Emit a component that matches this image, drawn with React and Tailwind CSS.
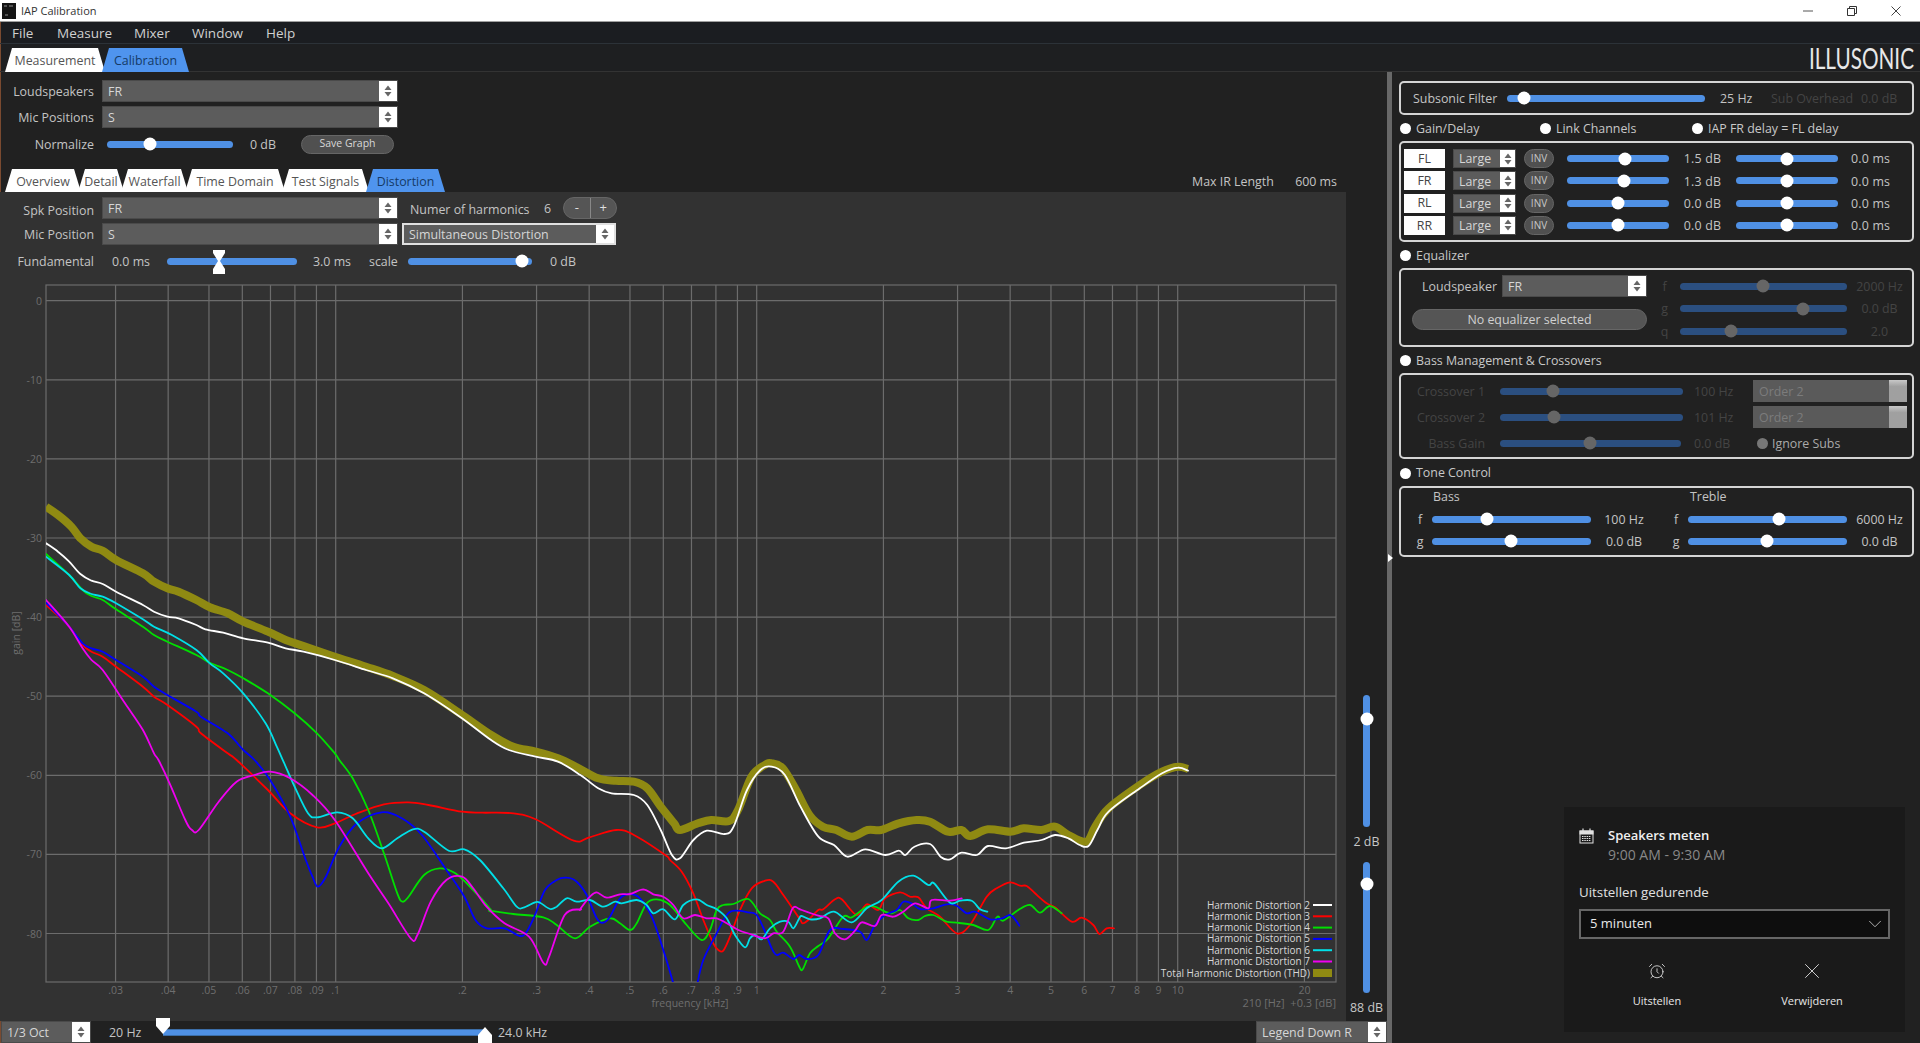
import React from "react";
import { AlarmClock, ChevronDown, X } from "lucide-react";

const FONT = "[font-family:'Open_Sans',sans-serif]";

// curve data was read off the plot, each run is [originX, originY, scaleX, points...]
const z5 = (...p) => [0, 280, 2.24, p];
const z6 = (...p) => [0, 760, 2.24, p];
const z7 = (...p) => [680, 720, 2.24, p];
const za = (...p) => [440, 860, 3, p];
const zb = (...p) => [760, 860, 3, p];

const toPoints = (runs) =>
  runs.flatMap(([ox, oy, sx, p]) => {
    const out = [];
    for (let i = 0; i < p.length; i += 2) out.push([ox + p[i] / sx, oy + p[i + 1] / 3]);
    return out;
  });

const smooth = (pts) => {
  let d = `M${pts[0][0].toFixed(1)} ${pts[0][1].toFixed(1)}`;
  for (let i = 0; i < pts.length - 1; i++) {
    const a = pts[i - 1] || pts[i];
    const b = pts[i];
    const c = pts[i + 1];
    const e = pts[i + 2] || c;
    const c1 = [b[0] + (c[0] - a[0]) / 6, b[1] + (c[1] - a[1]) / 6];
    const c2 = [c[0] - (e[0] - b[0]) / 6, c[1] - (e[1] - b[1]) / 6];
    d += `C${c1[0].toFixed(1)} ${c1[1].toFixed(1)} ${c2[0].toFixed(1)} ${c2[1].toFixed(1)} ${c[0].toFixed(1)} ${c[1].toFixed(1)}`;
  }
  return d;
};

const thd = [
  z5(103,680,130,705,160,740,180,775,205,800,230,812,260,840,320,880,345,905,375,925,400,935,440,960,470,982,510,1000,545,1025,600,1055,640,1080,680,1098,750,1130,820,1160,880,1188,950,1230,1030,1300,1100,1365,1150,1400,1200,1415,1250,1435),
  z6(1290,20,1340,55,1380,62,1420,65,1450,85,1480,140,1510,190),
  z7(0,330,40,310,70,300,110,303,130,270,160,170,190,135,205,130,230,145,260,210,290,285,320,320,350,330,385,350,420,330,450,330,490,310,530,300,560,305,600,335,630,330,650,348,690,328,740,335,770,325,810,330,840,320,870,345,910,365,930,320,960,265,1030,195,1080,155,1115,140,1138,147),
];
const white = [
  z5(103,790,130,815,155,845,180,882,205,902,230,912,260,935,320,975,345,995,375,1010,400,1015,440,1035,460,1048,500,1058,545,1075,600,1088,640,1105,680,1115,750,1140,820,1170,880,1195,950,1240,1030,1310,1100,1380,1140,1410,1200,1430,1250,1445),
  z6(1300,45,1340,85,1370,100,1420,105,1450,135,1480,210,1505,285),
  z7(0,415,30,360,60,332,100,342,120,320,150,210,180,150,205,140,235,165,270,260,310,350,345,375,375,410,415,388,460,405,490,392,505,405,525,380,560,372,585,412,605,418,630,398,665,405,690,378,730,385,770,368,810,360,840,345,870,355,895,375,915,378,935,330,960,275,1030,205,1080,160,1115,143,1138,152),
];
const red = [
  z5(103,975,155,1040,185,1095,205,1115,230,1130,260,1160,320,1220,345,1250,375,1275,440,1340,450,1360,510,1420),
  z6(530,0,600,90,650,160,710,202,750,190,800,160,860,133,915,127,960,135,1035,155,1080,158,1150,160,1200,178,1285,242,1320,232,1380,210,1420,225,1490,285),
  za(690,0,725,35,760,100,790,180,820,250,835,270,850,272,870,230,900,150,935,85,975,62,1000,65,1030,105,1078,175),
  zb(128,190,145,180,175,150,190,148,225,118,245,118,290,165,320,133,355,150,375,115,420,97,450,110,475,112,500,145,540,170,590,220,630,195,680,110,710,85,750,67,780,77,800,78,825,100,860,130,885,142,935,185,965,173,1000,195,1018,222,1040,205,1062,205),
];
const green = [
  z5(103,822,155,885,185,930,205,948,230,960,260,988,320,1040,345,1065,375,1085,440,1125,470,1148,510,1170,545,1195,600,1240,660,1300,710,1360,750,1420),
  z6(760,0,790,55,825,150,860,280,890,400,902,425,915,410,950,345,985,325,1020,340,1060,390,1100,450),
  za(150,152,220,162,310,172,350,195,405,235,450,200,510,175,540,190,570,210,590,190,620,130,650,118,690,135,740,195,785,240,810,210,830,150,850,135,880,132,925,117,960,160,990,180,1010,215,1050,260,1078,320),
  zb(128,328,150,280,175,258,205,235,250,170,275,172,320,140,345,140,375,155,395,160,420,150,445,175,475,180,495,168,520,165,560,185,590,188,640,195,685,210,712,170,730,182,775,150,810,135,840,158,870,138,905,160),
];
const cyan = [
  z5(103,830,155,885,180,925,205,942,230,950,260,970,320,1018,345,1040,385,1065,440,1110,470,1150,500,1180,545,1240,595,1330,620,1400),
  z6(635,5,660,80,690,160,710,172,755,157,790,175,825,235,855,265,890,235,925,208,950,215,1005,272,1040,268,1075,300),
  za(190,85,230,140,250,143,285,127,300,128,330,147,350,140,380,115,410,125,450,120,490,140,525,125,545,130,590,120,620,135,640,160,670,148,705,178,730,135,770,118,800,135,830,148,860,175,885,225,915,262,930,235,945,225,965,238,990,205,1020,185,1045,185,1060,205,1078,175),
  zb(125,168,150,178,180,175,222,155,275,187,320,145,365,120,415,65,460,47,505,75,522,70,570,128,600,122,635,122,660,148,682,155),
];
const blueA = [
  z5(103,968,155,1040,185,1090,205,1105,230,1115,260,1140,320,1190,345,1220,375,1245,440,1295,450,1310,510,1360,545,1410),
  z6(570,0,605,60,650,170,685,300,700,350,712,380,730,350,760,260,800,190,855,157,900,175,945,225,1000,330,1040,410,1065,480,1090,505,1130,505),
  za(240,228,260,215,285,165,315,90,350,60,380,53,410,65,440,105,470,175,490,188,510,170,540,115,570,102,600,115,635,170,670,270,703,380),
];
const blueB = [
  za(770,380,790,300,830,220,860,165,885,152,925,157,950,165,975,215,995,265,1010,285,1030,278,1060,297,1078,285),
  zb(140,297,175,285,210,210,250,207,300,215,320,240,345,195,375,165,410,150,430,125,455,130,480,147,520,145,560,133,590,137,620,160,645,155,690,178,725,175,750,165,765,178,778,197),
];
const magenta = [
  z5(103,960,155,1040,185,1105,205,1140,230,1170,280,1270,320,1350,345,1420),
  z6(355,0,380,70,415,180,430,210,445,210,490,125,530,65,570,45,605,35,650,55,700,105,750,180,825,340,870,430,920,535,935,525,965,425,1000,360,1035,350,1060,385,1090,440,1130,490,1185,530,1218,610,1230,590,1265,465,1300,448),
  za(420,148,450,110,470,97,500,113,540,103,570,102,610,88,640,103,670,110,700,135,730,175,765,165,800,175,830,175,860,190,895,210,930,222,975,235,1000,220,1030,215,1058,145,1078,147),
  zb(125,150,175,167,205,175,225,220,255,238,285,212,305,187,345,198,365,165,400,170,430,155,465,130,505,145,515,120,570,122,605,115),
];

const freqX = (f) => 335.7 + 421 * Math.log10(f / 0.1);
const gridFreqs = [0.03,0.04,0.05,0.06,0.07,0.08,0.09,0.1,0.2,0.3,0.4,0.5,0.6,0.7,0.8,0.9,1,2,3,4,5,6,7,8,9,10,20];
const freqLabel = (f) => (f < 1 ? String(f).replace("0.", ".") : String(f));
const gainY = (n) => 300.7 + n * 7.91;

const legend = [
  ["Harmonic Distortion 2", "#ffffff"],
  ["Harmonic Distortion 3", "#ff0000"],
  ["Harmonic Distortion 4", "#00e000"],
  ["Harmonic Distortion 5", "#0000ff"],
  ["Harmonic Distortion 6", "#00e0e8"],
  ["Harmonic Distortion 7", "#f000f0"],
];

const Chart = () => (
  <svg viewBox="0 272 1346 749" className="block w-[1346px] h-[749px]">
    <defs>
      <clipPath id="plot">
        <rect x="46" y="285" width="1290" height="697" />
      </clipPath>
    </defs>
    {gridFreqs.map((f) => (
      <line key={f} x1={freqX(f)} x2={freqX(f)} y1="285" y2="982" stroke="#6c6c6c" strokeWidth="1.2" />
    ))}
    {[0, 10, 20, 30, 40, 50, 60, 70, 80].map((n) => (
      <line key={n} x1="46" x2="1336" y1={gainY(n)} y2={gainY(n)} stroke="#6c6c6c" strokeWidth="1.2" />
    ))}
    <rect x="46" y="285" width="1290" height="697" fill="none" stroke="#6c6c6c" strokeWidth="1.2" />

    {[0, 10, 20, 30, 40, 50, 60, 70, 80].map((n) => (
      <text key={n} x="42" y={gainY(n) + 4} textAnchor="end" fontSize="10.5" fill="#6e6e6e" fontFamily="Open Sans">
        {n === 0 ? "0" : `-${n}`}
      </text>
    ))}
    {gridFreqs.map((f) => (
      <text key={f} x={freqX(f)} y="994" textAnchor="middle" fontSize="10.5" fill="#6e6e6e" fontFamily="Open Sans">
        {freqLabel(f)}
      </text>
    ))}
    <text x="690" y="1007" textAnchor="middle" fontSize="10.5" fill="#6e6e6e" fontFamily="Open Sans">frequency [kHz]</text>
    <text x="1336" y="1007" textAnchor="end" fontSize="11" fill="#6e6e6e" fontFamily="Open Sans">210 [Hz]{"\u00a0\u00a0"}+0.3 [dB]</text>
    <text x="20" y="633" textAnchor="middle" fontSize="10.5" fill="#6e6e6e" fontFamily="Open Sans" transform="rotate(-90 20 633)">gain [dB]</text>

    <g clipPath="url(#plot)" fill="none" strokeLinejoin="round" strokeLinecap="round">
      <path d={smooth(toPoints(thd))} stroke="#8f8a12" strokeWidth="8" strokeLinecap="butt" />
      <path d={smooth(toPoints(white))} stroke="#ffffff" strokeWidth="1.8" />
      <path d={smooth(toPoints(red))} stroke="#ff0000" strokeWidth="1.8" />
      <path d={smooth(toPoints(green))} stroke="#00e000" strokeWidth="1.8" />
      <path d={smooth(toPoints(blueA))} stroke="#0000ff" strokeWidth="1.8" />
      <path d={smooth(toPoints(blueB))} stroke="#0000ff" strokeWidth="1.8" />
      <path d={smooth(toPoints(cyan))} stroke="#00e0e8" strokeWidth="1.8" />
      <path d={smooth(toPoints(magenta))} stroke="#f000f0" strokeWidth="1.8" />
    </g>

    {legend.map(([name, color], i) => (
      <g key={name}>
        <text x="1310" y={908.5 + i * 11.3} textAnchor="end" fontSize="10" fill="#d8d8d8" fontFamily="Open Sans">{name}</text>
        <line x1="1313" x2="1332" y1={905 + i * 11.3} y2={905 + i * 11.3} stroke={color} strokeWidth="2" />
      </g>
    ))}
    <text x="1310" y="976.5" textAnchor="end" fontSize="10" fill="#d8d8d8" fontFamily="Open Sans">Total Harmonic Distortion (THD)</text>
    <rect x="1313" y="969" width="19" height="8" fill="#8f8a12" />
  </svg>
);

const Arrows = ({ color = "#666666" }) => (
  <svg width="8" height="12" viewBox="0 0 8 12">
    <path d="M4 0.5 L7.5 5 L0.5 5 Z M4 11.5 L7.5 7 L0.5 7 Z" fill={color} />
  </svg>
);

const Select = ({ value, className = "", arrowW = "w-[18px]", ring = false }) => (
  <div className={`flex shrink-0 ${ring ? "border-2 border-[#e0e0e0]" : "border border-[#4a4a4a]"} bg-[#5c5c5c] ${className}`}>
    <span className="flex-1 min-w-0 flex items-center pl-[5px] pt-[2px] text-[12.4px] text-[#d6d6d6] whitespace-nowrap overflow-hidden">{value}</span>
    <span className={`${arrowW} shrink-0 bg-white flex items-center justify-center`}>
      <Arrows />
    </span>
  </div>
);

const DisabledSelect = ({ value }) => (
  <div className="flex shrink-0 w-[154px] h-[22px] bg-[#5a5a5a]">
    <span className="flex-1 flex items-center pl-[6px] pt-[2px] text-[12.4px] text-[#7c7c7c]">{value}</span>
    <span className="w-[18px] bg-gradient-to-b from-[#c8c8c8] to-[#a0a0a0] to-30%" />
  </div>
);

const Slider = ({ width, at, dim = false }) => (
  <div className={`relative shrink-0 h-[7px] rounded-full ${dim ? "bg-[#2b4f80]" : "bg-[#4f90e4]"}`} style={{ width }}>
    {at !== undefined && (
      <span
        className={`absolute top-1/2 -translate-x-1/2 -translate-y-1/2 w-[13px] h-[13px] rounded-full ${dim ? "bg-[#666666]" : "bg-white"}`}
        style={{ left: at }}
      />
    )}
  </div>
);

const VSlider = ({ height, at }) => (
  <div className="relative shrink-0 w-[7px] rounded-full bg-[#4f90e4]" style={{ height }}>
    <span className="absolute left-1/2 -translate-x-1/2 -translate-y-1/2 w-[13px] h-[13px] rounded-full bg-white" style={{ top: at }} />
  </div>
);

const Tab = ({ label, width, active, first }) => (
  <div
    className={`flex items-center justify-center h-full pt-[3px] text-[12.4px] [clip-path:polygon(7px_0,calc(100%-7px)_0,100%_100%,0_100%)] ${
      first ? "" : "-ml-[3px]"
    } ${active ? "bg-[#4f94ee] text-[#153a66]" : "bg-white text-[#555555]"}`}
    style={{ width }}
  >
    {label}
  </div>
);

const Radio = ({ label, className = "" }) => (
  <div className={`flex items-center gap-[5px] text-[12.4px] text-[#c8c8c8] whitespace-nowrap pt-[2px] ${className}`}>
    <span className="w-[11px] h-[11px] rounded-full bg-white -ml-[1px]" />
    {label}
  </div>
);

const Box = ({ className = "", children }) => (
  <div className={`border-2 border-[#d4d4d4] rounded-[5px] ${className}`}>{children}</div>
);

const Label = ({ className = "", children }) => (
  <span className={`shrink-0 pt-[2px] text-[12.4px] whitespace-nowrap ${className}`}>{children}</span>
);

const channels = [
  ["FL", 58, "1.5 dB"],
  ["FR", 57, "1.3 dB"],
  ["RL", 51, "0.0 dB"],
  ["RR", 51, "0.0 dB"],
];

const MainPanel = () => (
  <div className="w-[1346px] h-full bg-[#323232] flex flex-col">
    <div className="flex items-center h-[22px] mt-[5px]">
      <Label className="w-[94px] text-right !pt-[6px]">Spk Position</Label>
      <Select value="FR" className="ml-[8px] w-[296px] h-full" />
      <Label className="ml-[12px] w-[134px] !pt-[4px]">Numer of harmonics</Label>
      <Label className="w-[19px]">6</Label>
      <div className="flex w-[54px] h-full rounded-full border border-[#666666] bg-[#555555] text-[#e0e0e0] text-[13px]">
        <span className="flex-1 flex items-center justify-center border-r border-[#888888]">-</span>
        <span className="flex-1 flex items-center justify-center">+</span>
      </div>
    </div>
    <div className="flex items-center h-[22px] mt-[4px]">
      <Label className="w-[94px] text-right">Mic Position</Label>
      <Select value="S" className="ml-[8px] w-[296px] h-full" />
      <Select value="Simultaneous Distortion" ring className="ml-[4px] w-[214px] h-full" />
    </div>
    <div className="flex items-center h-[22px] mt-[5px]">
      <Label className="w-[94px] text-right">Fundamental</Label>
      <Label className="ml-[18px] w-[55px]">0.0 ms</Label>
      <div className="relative">
        <Slider width={130} />
        <svg width="16" height="24" viewBox="0 0 16 24" className="absolute left-[44px] -top-[8px]">
          <path d="M2 0 H14 V3 L9 11 L14 19 V24 H2 V19 L7 11 L2 3 Z" fill="#ffffff" />
        </svg>
      </div>
      <Label className="ml-[16px] w-[56px]">3.0 ms</Label>
      <Label className="w-[39px]">scale</Label>
      <Slider width={124} at={114} />
      <Label className="ml-[18px]">0 dB</Label>
    </div>
    <Chart />
  </div>
);

const SideStrip = () => (
  <div className="w-[41px] h-full flex flex-col items-center pt-[503px] text-[12.4px] text-[#c8c8c8]">
    <VSlider height={132} at={24} />
    <span className="h-[18px] mt-[6px] leading-[18px] whitespace-nowrap">2 dB</span>
    <div className="mt-[11px]">
      <VSlider height={131} at={22} />
    </div>
    <span className="h-[18px] mt-[6px] leading-[18px] whitespace-nowrap">88 dB</span>
  </div>
);

const BottomBar = () => (
  <div className="flex items-center h-[22px]">
    <Select value="1/3 Oct" className="ml-[1px] w-[90px] h-full" />
    <Label className="ml-[18px] w-[54px]">20 Hz</Label>
    <div className="relative w-[322px] h-[7px] bg-[#4f90e4] border-y border-[#3c6ea8]">
      <svg width="14" height="16" viewBox="0 0 14 16" className="absolute -left-[7px] -top-[12px]">
        <path d="M0 0 H14 V8 L7 16 L0 8 Z" fill="#ffffff" />
      </svg>
      <svg width="14" height="16" viewBox="0 0 14 16" className="absolute -right-[7px] -bottom-[8px]">
        <path d="M0 16 H14 V8 L7 0 L0 8 Z" fill="#ffffff" />
      </svg>
    </div>
    <Label className="ml-[13px]">24.0 kHz</Label>
    <Select value="Legend Down R" className="ml-auto w-[131px] h-full" />
  </div>
);

const LeftColumn = () => (
  <div className="w-[1387px] shrink-0 flex flex-col shadow-[inset_1px_0_0_#7a4a30]">
    <div className="h-[97px] pt-[8px] flex flex-col">
      <div className="flex items-center h-[22px]">
        <Label className="w-[94px] text-right">Loudspeakers</Label>
        <Select value="FR" className="ml-[8px] w-[296px] h-full" />
      </div>
      <div className="flex items-center h-[22px] mt-[4px]">
        <Label className="w-[94px] text-right">Mic Positions</Label>
        <Select value="S" className="ml-[8px] w-[296px] h-full" />
      </div>
      <div className="flex items-center h-[20px] mt-[6px]">
        <Label className="w-[94px] text-right">Normalize</Label>
        <div className="ml-[13px]">
          <Slider width={126} at={43} />
        </div>
        <Label className="ml-[17px] w-[51px]">0 dB</Label>
        <div className="w-[93px] h-[19px] rounded-full border border-[#666666] bg-[#505050] flex items-center justify-center text-[10.5px] text-[#d8d8d8]">
          Save Graph
        </div>
      </div>
    </div>
    <div className="flex items-center h-[23px] pl-[5px] shrink-0">
      <Tab label="Overview" width={76} first />
      <Tab label="Detail" width={46} />
      <Tab label="Waterfall" width={67} />
      <Tab label="Time Domain" width={100} />
      <Tab label="Test Signals" width={87} />
      <Tab label="Distortion" width={79} active />
      <Label className="ml-auto mr-[50px] w-[145px] flex justify-between !pt-[4px]">
        <span>Max IR Length</span>
        <span>600 ms</span>
      </Label>
    </div>
    <div className="flex h-[829px] shrink-0">
      <MainPanel />
      <SideStrip />
    </div>
    <BottomBar />
  </div>
);

const RightPanel = () => (
  <div className="flex-1 pl-[7px] pt-[9px] w-[528px]">
    <div className="w-[515px] flex flex-col">
      <Box className="h-[34px] flex items-center pl-[12px]">
        <Label className="w-[94px]">Subsonic Filter</Label>
        <Slider width={198} at={17} />
        <Label className="ml-[15px] w-[51px]">25 Hz</Label>
        <Label className="w-[90px] text-[#444444]">Sub Overhead</Label>
        <Label className="text-[#444444]">0.0 dB</Label>
      </Box>
      <div className="h-[26px] flex items-center pl-[2px]">
        <Radio label="Gain/Delay" className="w-[140px]" />
        <Radio label="Link Channels" className="w-[152px]" />
        <Radio label="IAP FR delay = FL delay" />
      </div>
      <Box className="h-[101px] pl-[3px] pt-[6px] flex flex-col gap-[3.3px]">
        {channels.map(([name, at, gain]) => (
          <div key={name} className="flex items-center h-[19px]">
            <span className="w-[41px] h-full bg-white text-[#444444] text-[12.4px] pt-[1px] flex items-center justify-center">{name}</span>
            <Select value="Large" arrowW="w-[15px]" className="ml-[8px] w-[63px] h-full" />
            <span className="ml-[8px] w-[30px] h-full rounded-full border border-[#666666] bg-[#505050] text-[10px] text-[#c8c8c8] flex items-center justify-center">INV</span>
            <div className="ml-[13px]">
              <Slider width={102} at={at} />
            </div>
            <Label className="w-[67px] text-center tracking-[0.2px]">{gain}</Label>
            <Slider width={102} at={51} />
            <Label className="ml-[13px] tracking-[0.2px]">0.0 ms</Label>
          </div>
        ))}
      </Box>
      <div className="h-[26px] flex items-center pl-[2px]">
        <Radio label="Equalizer" />
      </div>
      <Box className="h-[79px] flex">
        <div className="w-[246px] pt-[5px] flex flex-col">
          <div className="flex items-center h-[22px]">
            <Label className="w-[96px] text-right">Loudspeaker</Label>
            <Select value="FR" className="ml-[5px] w-[145px] h-full" />
          </div>
          <div className="ml-[11px] mt-[12px] w-[235px] h-[21px] rounded-full border border-[#666666] bg-[#555555] flex items-center justify-center pt-[1px] text-[12.4px] text-[#d0d0d0]">
            No equalizer selected
          </div>
        </div>
        <div className="pt-[5px] flex flex-col">
          {[["f", 83, "2000 Hz"], ["g", 123, "0.0 dB"], ["q", 51, "2.0"]].map(([l, at, v]) => (
            <div key={l} className="flex items-center h-[22.5px] text-[#444444]">
              <Label className="w-[33px] text-center pl-[2px]">{l}</Label>
              <Slider width={167} at={at} dim />
              <Label className="w-[65px] text-center">{v}</Label>
            </div>
          ))}
        </div>
      </Box>
      <div className="h-[26px] flex items-center pl-[2px]">
        <Radio label="Bass Management & Crossovers" />
      </div>
      <Box className="h-[86px] pt-[5px] flex flex-col text-[#444444]">
        {[["Crossover 1", 53, "100 Hz"], ["Crossover 2", 54, "101 Hz"]].map(([l, at, v]) => (
          <div key={l} className="flex items-center h-[22px] mb-[4px]">
            <Label className="w-[84px] text-right">{l}</Label>
            <div className="ml-[15px]">
              <Slider width={183} at={at} dim />
            </div>
            <Label className="ml-[11px] w-[59px]">{v}</Label>
            <DisabledSelect value="Order 2" />
          </div>
        ))}
        <div className="flex items-center h-[22px]">
          <Label className="w-[84px] text-right">Bass Gain</Label>
          <div className="ml-[15px]">
            <Slider width={181} at={90} dim />
          </div>
          <Label className="ml-[13px] w-[63px]">0.0 dB</Label>
          <span className="w-[11px] h-[11px] rounded-full bg-[#777777]" />
          <Label className="ml-[4px] text-[#aaaaaa]">Ignore Subs</Label>
        </div>
      </Box>
      <div className="h-[27px] flex items-center pl-[2px]">
        <Radio label="Tone Control" />
      </div>
      <Box className="h-[71px] flex flex-col">
        <div className="h-[16px] mb-[4px] flex items-center">
          <Label className="ml-[32px] w-[257px]">Bass</Label>
          <Label>Treble</Label>
        </div>
        {[["f", 55, "100 Hz", 91, "6000 Hz"], ["g", 79, "0.0 dB", 79, "0.0 dB"]].map(([l, a, v1, b, v2]) => (
          <div key={l} className="flex items-center h-[22px]">
            <Label className="w-[31px] text-center pl-[7px]">{l}</Label>
            <Slider width={159} at={a} />
            <Label className="w-[66px] text-center">{v1}</Label>
            <Label className="w-[31px] text-center pl-[7px]">{l}</Label>
            <Slider width={159} at={b} />
            <Label className="w-[65px] text-center">{v2}</Label>
          </div>
        ))}
      </Box>
    </div>
  </div>
);

const Notification = () => (
  <div className="absolute left-[1564px] top-[807px] w-[341px] h-[225px] bg-[#1a1a1a] px-[15px] text-[#e8e8e8]">
    <div className="flex pt-[19px]">
      <svg width="15" height="16" viewBox="0 0 15 16" className="mt-[2px] shrink-0" fill="none" stroke="#e0e0e0">
        <rect x="1" y="3" width="13" height="12" strokeWidth="1" />
        <rect x="1" y="3" width="13" height="3" fill="#e0e0e0" strokeWidth="1" />
        <path d="M4 0.5 V3 M11 0.5 V3" strokeWidth="1.2" />
        <path d="M3 8.5 H12 M3 10.5 H12 M3 12.5 H12" strokeWidth="1" strokeDasharray="1.5 0.8" />
      </svg>
      <div className="ml-[14px]">
        <div className="text-[13px] leading-[19px] font-semibold text-[#f0f0f0]">Speakers meten</div>
        <div className="text-[14px] leading-[19px] text-[#888888]">9:00 AM - 9:30 AM</div>
      </div>
    </div>
    <div className="mt-[18px] text-[13.3px] leading-[20px] text-[#e0e0e0]">Uitstellen gedurende</div>
    <div className="mt-[7px] w-[311px] h-[30px] border-2 border-[#666666] bg-[#0e0e0e] flex items-center justify-between pl-[9px] pr-[2px] text-[13px]">
      5 minuten
      <ChevronDown size={22} strokeWidth={0.8} />
    </div>
    <div className="flex mt-[23px]">
      <div className="w-[156px] flex flex-col items-center">
        <AlarmClock size={18} strokeWidth={1.1} />
        <span className="mt-[13px] text-[11px] leading-[16px]">Uitstellen</span>
      </div>
      <div className="w-[154px] flex flex-col items-center">
        <X size={26} strokeWidth={0.8} className="-mt-[4px]" />
        <span className="mt-[9px] text-[11px] leading-[16px]">Verwijderen</span>
      </div>
    </div>
  </div>
);

export default function App() {
  const menu = [["File", 45], ["Measure", 77], ["Mixer", 58], ["Window", 74], ["Help", 40]];
  return (
    <div className={`relative w-screen h-screen overflow-hidden bg-[#212121] text-[#c4c4c4] flex flex-col ${FONT}`}>
      <div className="h-[22px] shrink-0 bg-white border-b border-[#a0a0a0] flex items-center text-[11px] text-[#333333]">
        <svg width="14" height="16" viewBox="0 0 14 16" className="ml-[2px] shrink-0">
          <rect width="14" height="16" fill="#141414" />
          <path d="M2 3 H5 M7 3 H11 M3 12 H6" stroke="#666666" strokeWidth="1.5" />
        </svg>
        <span className="ml-[5px] pt-[1px]">IAP Calibration</span>
        <div className="ml-auto flex items-center text-[#444444]">
          <svg width="12" height="12" viewBox="0 0 12 12" className="mr-[32px]"><path d="M1 6 H11" stroke="#555555" strokeWidth="1" /></svg>
          <svg width="12" height="12" viewBox="0 0 12 12" className="mr-[32px]" fill="none" stroke="#333333"><path d="M1.5 3.5 H8.5 V10.5 H1.5 Z M3.5 3.5 V1.5 H10.5 V8.5 H8.5" /></svg>
          <svg width="12" height="12" viewBox="0 0 12 12" className="mr-[18px]"><path d="M1.5 1.5 L10.5 10.5 M10.5 1.5 L1.5 10.5" stroke="#444444" strokeWidth="1" /></svg>
        </div>
      </div>
      <div className="h-[22px] shrink-0 bg-[#1b1d21] border-b border-[#2c3238] flex items-center pl-[12px] pt-[2px] text-[13.5px] text-[#d0d0d0] shadow-[inset_1px_0_0_#7a4a30]">
        {menu.map(([m, w]) => (
          <span key={m} style={{ width: w }}>{m}</span>
        ))}
      </div>
      <div className="h-[28px] shrink-0 bg-[#1e1f21] border-b border-[#333333] flex items-end pl-[5px] shadow-[inset_1px_0_0_#7a4a30]">
        <div className="flex h-[24px] -mb-[1px]">
          <Tab label="Measurement" width={100} first />
          <Tab label="Calibration" width={87} active />
        </div>
        <span className="ml-auto mr-[6px] self-center origin-right scale-x-[0.74] text-[28px] leading-none font-normal text-[#e8e8e8] [font-family:'Lato',sans-serif] whitespace-nowrap">ILLUSONIC</span>
      </div>
      <div className="flex flex-1 min-h-0">
        <LeftColumn />
        <div className="relative w-[5px] shrink-0 bg-[#686868]">
          <span className="absolute left-[1px] top-[482px] w-0 h-0 border-y-[4px] border-y-transparent border-l-[5px] border-l-white" />
        </div>
        <RightPanel />
      </div>
      <Notification />
    </div>
  );
}
